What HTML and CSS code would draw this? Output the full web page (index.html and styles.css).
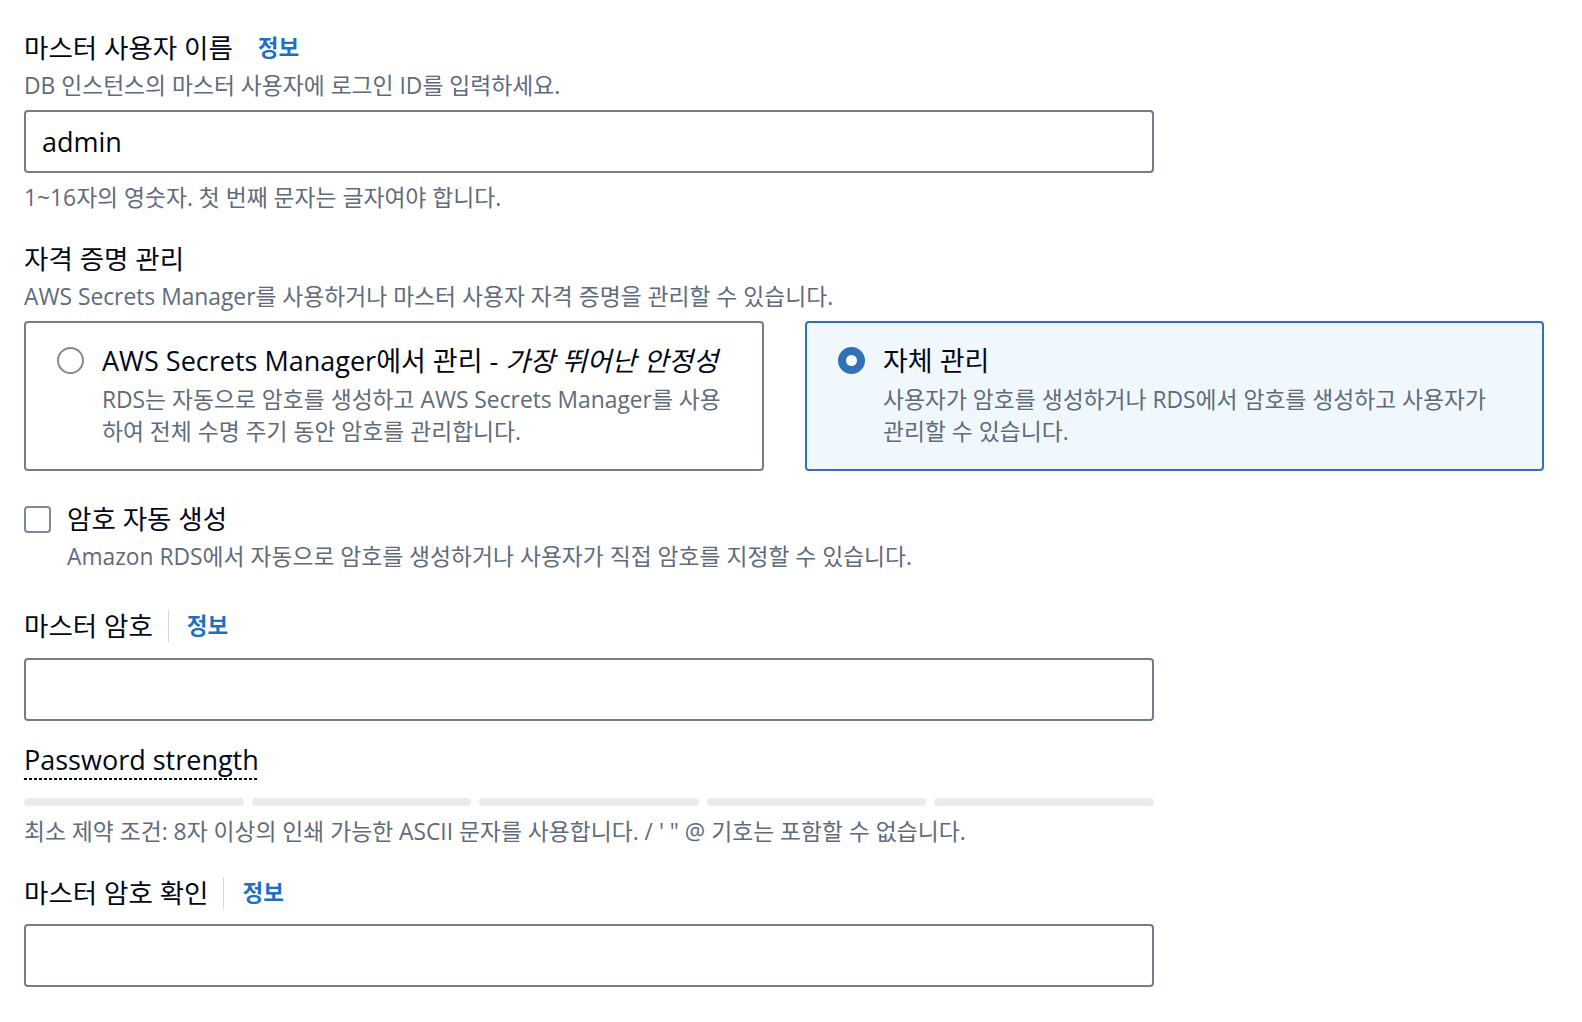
FILE: index.html
```html
<!DOCTYPE html>
<html lang="ko">
<head>
<meta charset="utf-8">
<title>마스터 사용자 설정</title>
<link rel="stylesheet" href="styles.css">
</head>
<body>
<main class="form">
  <section class="field field-username">
    <div class="label-row">
      <span class="label">마스터 사용자 이름</span>
      <a class="info info-plain">정보</a>
    </div>
    <div class="desc">DB 인스턴스의 마스터 사용자에 로그인 ID를 입력하세요.</div>
    <div class="input"><span class="value">admin</span></div>
    <div class="constraint">1~16자의 영숫자. 첫 번째 문자는 글자여야 합니다.</div>
  </section>

  <section class="field field-credentials">
    <div class="label-row">
      <span class="label">자격 증명 관리</span>
    </div>
    <div class="desc">AWS Secrets Manager를 사용하거나 마스터 사용자 자격 증명을 관리할 수 있습니다.</div>
    <div class="tiles">
      <div class="tile">
        <span class="radio"></span>
        <div class="tile-body">
          <div class="tile-title">AWS Secrets Manager에서 관리 - <em>가장 뛰어난 안정성</em></div>
          <div class="tile-desc">RDS는 자동으로 암호를 생성하고 AWS Secrets Manager를 사용<br>하여 전체 수명 주기 동안 암호를 관리합니다.</div>
        </div>
      </div>
      <div class="tile tile-selected">
        <span class="radio radio-checked"></span>
        <div class="tile-body">
          <div class="tile-title">자체 관리</div>
          <div class="tile-desc">사용자가 암호를 생성하거나 RDS에서 암호를 생성하고 사용자가<br>관리할 수 있습니다.</div>
        </div>
      </div>
    </div>
  </section>

  <section class="field field-autogen">
    <div class="check-row">
      <span class="checkbox"></span>
      <span class="label">암호 자동 생성</span>
    </div>
    <div class="desc check-desc">Amazon RDS에서 자동으로 암호를 생성하거나 사용자가 직접 암호를 지정할 수 있습니다.</div>
  </section>

  <section class="field field-password">
    <div class="label-row">
      <span class="label">마스터 암호</span>
      <span class="sep"></span>
      <a class="info">정보</a>
    </div>
    <div class="input input-tight"></div>
    <div class="strength">
      <span class="strength-label">Password strength</span>
    </div>
    <div class="bars">
      <span class="bar"></span>
      <span class="bar"></span>
      <span class="bar"></span>
      <span class="bar"></span>
      <span class="bar"></span>
    </div>
    <div class="constraint constraint-pw">최소 제약 조건: 8자 이상의 인쇄 가능한 ASCII 문자를 사용합니다. / ' " @ 기호는 포함할 수 없습니다.</div>
  </section>

  <section class="field field-confirm">
    <div class="label-row">
      <span class="label">마스터 암호 확인</span>
      <span class="sep"></span>
      <a class="info">정보</a>
    </div>
    <div class="input input-confirm"></div>
  </section>
</main>
</body>
</html>
```

FILE: styles.css
```css
* {
  box-sizing: border-box;
}

html,
body {
  margin: 0;
  padding: 0;
  background: #ffffff;
}

body {
  font-family: "Open Sans", "Noto Sans CJK KR", sans-serif;
  color: #000716;
}

.form {
  width: 1582px;
  padding: 30px 0 0 24px;
}

.label-row {
  display: flex;
  align-items: center;
  height: 36px;
}

.label {
  font-size: 26.5px;
  line-height: 36px;
  white-space: nowrap;
}

.info {
  font-size: 22.5px;
  font-weight: 700;
  line-height: 36px;
  color: #1f6fc0;
  text-decoration: none;
}

.info-plain {
  margin-left: 25px;
}

.sep {
  width: 1px;
  height: 32px;
  background: #d5d9de;
  margin: 0 18px 0 15px;
}

.desc {
  font-size: 22.8px;
  line-height: 30px;
  color: #5f6b7a;
  margin-top: 5px;
  white-space: nowrap;
}

.input {
  width: 1130px;
  height: 63px;
  margin-top: 9px;
  padding: 0 16px;
  border: 2px solid #737c88;
  border-radius: 4px;
  display: flex;
  align-items: center;
  background: #ffffff;
}

.input-tight {
  margin-top: 14px;
}

.input-confirm {
  margin-top: 13px;
}

.value {
  font-size: 27px;
  line-height: 36px;
  color: #000716;
}

.constraint {
  font-size: 22.8px;
  line-height: 30px;
  color: #5f6b7a;
  margin-top: 10px;
  white-space: nowrap;
}

.field-credentials {
  margin-top: 28px;
}

.tiles {
  margin-top: 9px;
  display: grid;
  grid-template-columns: 740px 739px;
  column-gap: 41px;
}

.tile {
  height: 150px;
  border: 2px solid #737c88;
  border-radius: 4px;
  padding: 19px 28px 0 31px;
  display: flex;
  align-items: flex-start;
  background: #ffffff;
}

.tile-selected {
  border-color: #3071b8;
  background: #f1f8fd;
}

.radio {
  flex: none;
  width: 27px;
  height: 27px;
  margin-top: 5px;
  margin-right: 18px;
  border: 2px solid #7d8998;
  border-radius: 50%;
  background: #ffffff;
}

.radio-checked {
  border: 8px solid #3071b8;
}

.tile-body {
  flex: 1;
  min-width: 0;
}

.tile-title {
  font-size: 27px;
  line-height: 38px;
  white-space: nowrap;
}

.tile-title em {
  font-style: italic;
}

.tile-desc {
  margin-top: 4px;
  font-size: 22.8px;
  line-height: 31.5px;
  color: #5f6b7a;
  white-space: nowrap;
}

.field-autogen {
  margin-top: 30px;
}

.check-row {
  display: flex;
  align-items: center;
  height: 36px;
}

.checkbox {
  flex: none;
  width: 27px;
  height: 27px;
  border: 2px solid #7d8998;
  border-radius: 4px;
  margin-right: 16px;
  background: #ffffff;
}

.check-desc {
  margin-left: 43px;
  margin-top: 5px;
}

.field-password {
  margin-top: 36px;
}

.strength {
  margin-top: 21px;
  height: 38px;
}

.strength-label {
  display: inline-block;
  font-size: 27px;
  line-height: 36px;
  padding-bottom: 2px;
  color: #000716;
  background: repeating-linear-gradient(90deg, #000716 0 3px, transparent 3px 5px) left bottom / 100% 2px no-repeat;
}

.bars {
  margin-top: 18px;
  width: 1130px;
  display: flex;
  gap: 8px;
}

.bar {
  flex: 1;
  height: 8px;
  border-radius: 4px;
  background: #e9ebed;
}

.constraint-pw {
  margin-top: 11px;
}

.field-confirm {
  margin-top: 28px;
}
```
